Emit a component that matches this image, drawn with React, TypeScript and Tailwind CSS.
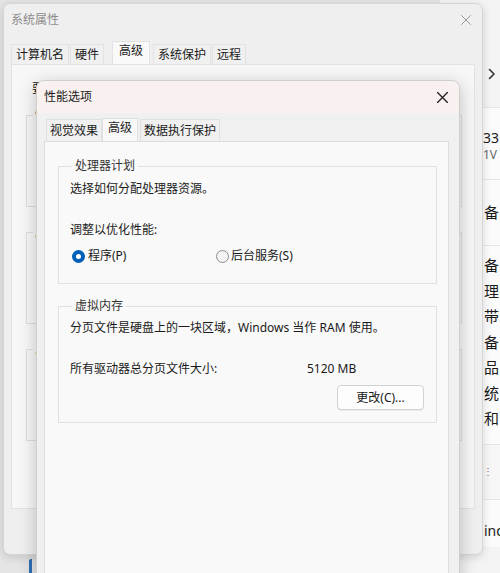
import React from 'react';

const font = "font-['Noto_Sans','Noto_Sans_CJK_SC',sans-serif]";

function CloseIcon({ size, color, stroke }: { size: number; color: string; stroke: number }) {
  return (
    <svg width={size} height={size} viewBox="0 0 10 10" fill="none">
      <path d="M0.5 0.5L9.5 9.5M9.5 0.5L0.5 9.5" stroke={color} strokeWidth={stroke} strokeLinecap="round" />
    </svg>
  );
}

function Radio({ checked }: { checked?: boolean }) {
  if (checked) {
    return (
      <span className="w-[13px] h-[13px] rounded-full bg-[#005fb8] flex items-center justify-center">
        <span className="w-[5px] h-[5px] rounded-full bg-white" />
      </span>
    );
  }
  return <span className="w-[13px] h-[13px] rounded-full border border-[#8d8d8d] bg-[#f3f3f3]" />;
}

function BackSystemProps() {
  return (
    <div className="absolute left-[3px] top-[3px] w-[480px] h-[552px] rounded-[7px] border border-[#d6d6d6] bg-[#efefef] shadow-[0_2px_10px_rgba(0,0,0,0.15)] text-[#8c8c8c]">
      <div className="h-[32px] flex items-center justify-between pl-[7px] pr-[11px]">
        <span className="text-[12px] leading-[16px]">系统属性</span>
        <CloseIcon size={10} color="#9a9a9a" stroke={1} />
      </div>
      <div className="px-[7px]">
        <div className="flex items-end h-[28px] text-[12px] leading-[16px] text-[#1a1a1a]">
          <span className="h-[20px] px-[4px] border border-b-0 border-[#e2e2e2] bg-[#f0f0f0] flex items-center">计算机名</span>
          <span className="h-[20px] px-[4px] ml-[1px] border border-b-0 border-[#e2e2e2] bg-[#f0f0f0] flex items-center">硬件</span>
          <span className="h-[23px] px-[6px] ml-[8px] bg-[#f9f9f9] border border-b-0 border-[#e2e2e2] flex items-start pt-[1px]">高级</span>
          <span className="h-[20px] px-[4px] ml-[3px] border border-b-0 border-[#e2e2e2] bg-[#f0f0f0] flex items-center">系统保护</span>
          <span className="h-[20px] px-[4px] ml-[1px] border border-b-0 border-[#e2e2e2] bg-[#f0f0f0] flex items-center">远程</span>
        </div>
        <div className="h-[445px] border border-[#e2e2e2] bg-[#f7f7f7] pl-[14px] pr-[12px] pt-[16px] text-[12px] leading-[16px] text-[#1a1a1a]">
          <p className="pl-[6px]">要进行大多数更改，你必须作为管理员登录。</p>
          <div className="mt-[10px] flex flex-col gap-[17px]">
            {['性能', '用户配置文件', '启动和故障恢复'].map((t) => (
              <fieldset key={t} className="h-[100px] border border-[#dedede] px-[6px]">
                <legend className="px-[2px] text-[#333]">{t}</legend>
              </fieldset>
            ))}
          </div>
        </div>
      </div>
    </div>
  );
}

function SettingsBehind() {
  const lines = ['备', '理', '带', '备', '品', '统', '和'];
  return (
    <div className="absolute left-[440px] top-0 w-[80px] h-[573px] bg-[#f4f4f4] text-[#1a1a1a]">
      <div className="ml-[44px] h-[40px]" />
      <div className="ml-[44px] h-[67px] flex items-center pl-[4px]">
        <svg width="8" height="12" viewBox="0 0 8 12" fill="none">
          <path d="M1.5 1.5L6 6L1.5 10.5" stroke="#333" strokeWidth="1.6" strokeLinecap="round" strokeLinejoin="round" />
        </svg>
      </div>
      <div className="ml-[42px] bg-[#fbfbfb] border-t border-[#e6e6e6]">
        <div className="h-[71px] flex flex-col justify-center pl-[1px] pt-[4px]">
          <span className="text-[14px] leading-[18px]">331</span>
          <span className="text-[12px] leading-[16px] text-[#666]">1V</span>
        </div>
        <div className="h-[66px] border-t border-[#e6e6e6] flex items-center pl-[2px] text-[15px]">备</div>
        <div className="border-t border-[#e6e6e6] pt-[7px] pb-[12px] pl-[2px] flex flex-col text-[15px] leading-[25.5px]">
          {lines.map((l, i) => (
            <span key={i}>{l}</span>
          ))}
        </div>
        <div className="h-[55px] border-t border-[#e6e6e6] bg-[#f7f7f7] flex items-center pl-[1px] text-[10px] text-[#777]">⋮</div>
        <div className="h-[48px] border-t border-[#e6e6e6] bg-[#fbfbfb] flex items-center pl-[2px] pt-[14px] text-[14px]">ind</div>
      </div>
    </div>
  );
}

function PerformanceOptions() {
  return (
    <div className="absolute left-[36px] top-[80px] w-[424px] h-[510px] rounded-t-[8px] border border-[#cfcfcf] bg-[#f0f0f0] shadow-[0_4px_18px_rgba(0,0,0,0.22)] overflow-hidden text-[#1a1a1a]">
      <div className="h-[32px] bg-[#f9f1ef] flex items-center justify-between pl-[7px] pr-[11px]">
        <span className="text-[12px] leading-[16px]">性能选项</span>
        <CloseIcon size={11} color="#222" stroke={1.2} />
      </div>
      <div className="pl-[7px] pr-[10px]">
        <div className="flex items-end h-[28px] text-[12px] leading-[16px]">
          <span className="h-[22px] px-[3px] ml-[2px] border border-b-0 border-[#e0e0e0] bg-[#f0f0f0] flex items-center">视觉效果</span>
          <span className="h-[23px] px-[5px] bg-[#f9f9f9] border border-b-0 border-[#e0e0e0] flex items-start pt-[1px]">高级</span>
          <span className="h-[22px] px-[3px] ml-[2px] border border-b-0 border-[#e0e0e0] bg-[#f0f0f0] flex items-center">数据执行保护</span>
        </div>
        <div className="h-[460px] border border-[#dddddd] bg-[#f9f9f9] pl-[13px] pr-[11px] pt-[16px] text-[12px] leading-[16px]">
          <fieldset className="border border-[#e1e1e1] pl-[11px] pr-[10px] pb-[19px]">
            <legend className="ml-[2px] px-[3px] text-[#333]">处理器计划</legend>
            <p className="mt-[7px]">选择如何分配处理器资源。</p>
            <p className="mt-[25px]">调整以优化性能:</p>
            <div className="mt-[10px] flex items-center">
              <label className="w-[146px] flex items-center gap-[3px] pl-[2px]">
                <Radio checked />
                <span>程序(P)</span>
              </label>
              <label className="flex items-center gap-[2px]">
                <Radio />
                <span>后台服务(S)</span>
              </label>
            </div>
          </fieldset>
          <fieldset className="mt-[14px] border border-[#e1e1e1] pl-[11px] pr-[12px] pb-[12px]">
            <legend className="ml-[2px] px-[3px] text-[#333]">虚拟内存</legend>
            <p className="mt-[6px]">分页文件是硬盘上的一块区域，Windows 当作 RAM 使用。</p>
            <div className="mt-[25px] flex">
              <span className="w-[237px]">所有驱动器总分页文件大小:</span>
              <span>5120 MB</span>
            </div>
            <div className="mt-[8px] flex justify-end">
              <button className="w-[87px] h-[25px] rounded-[4px] border border-[#d2d2d2] bg-[#fdfdfd] text-[12px] leading-[16px] text-[#1a1a1a] shadow-[0_1px_0_rgba(0,0,0,0.06)]">
                更改(C)...
              </button>
            </div>
          </fieldset>
        </div>
      </div>
    </div>
  );
}

export default function App() {
  return (
    <div className={`relative w-[500px] h-[573px] overflow-hidden bg-[#e5e5e5] ${font}`}>
      <div className="absolute left-[29px] top-[559px] w-[3px] h-[14px] rounded-tl-[2px] bg-[#2f6fb5]" />
      <SettingsBehind />
      <BackSystemProps />
      <PerformanceOptions />
    </div>
  );
}
